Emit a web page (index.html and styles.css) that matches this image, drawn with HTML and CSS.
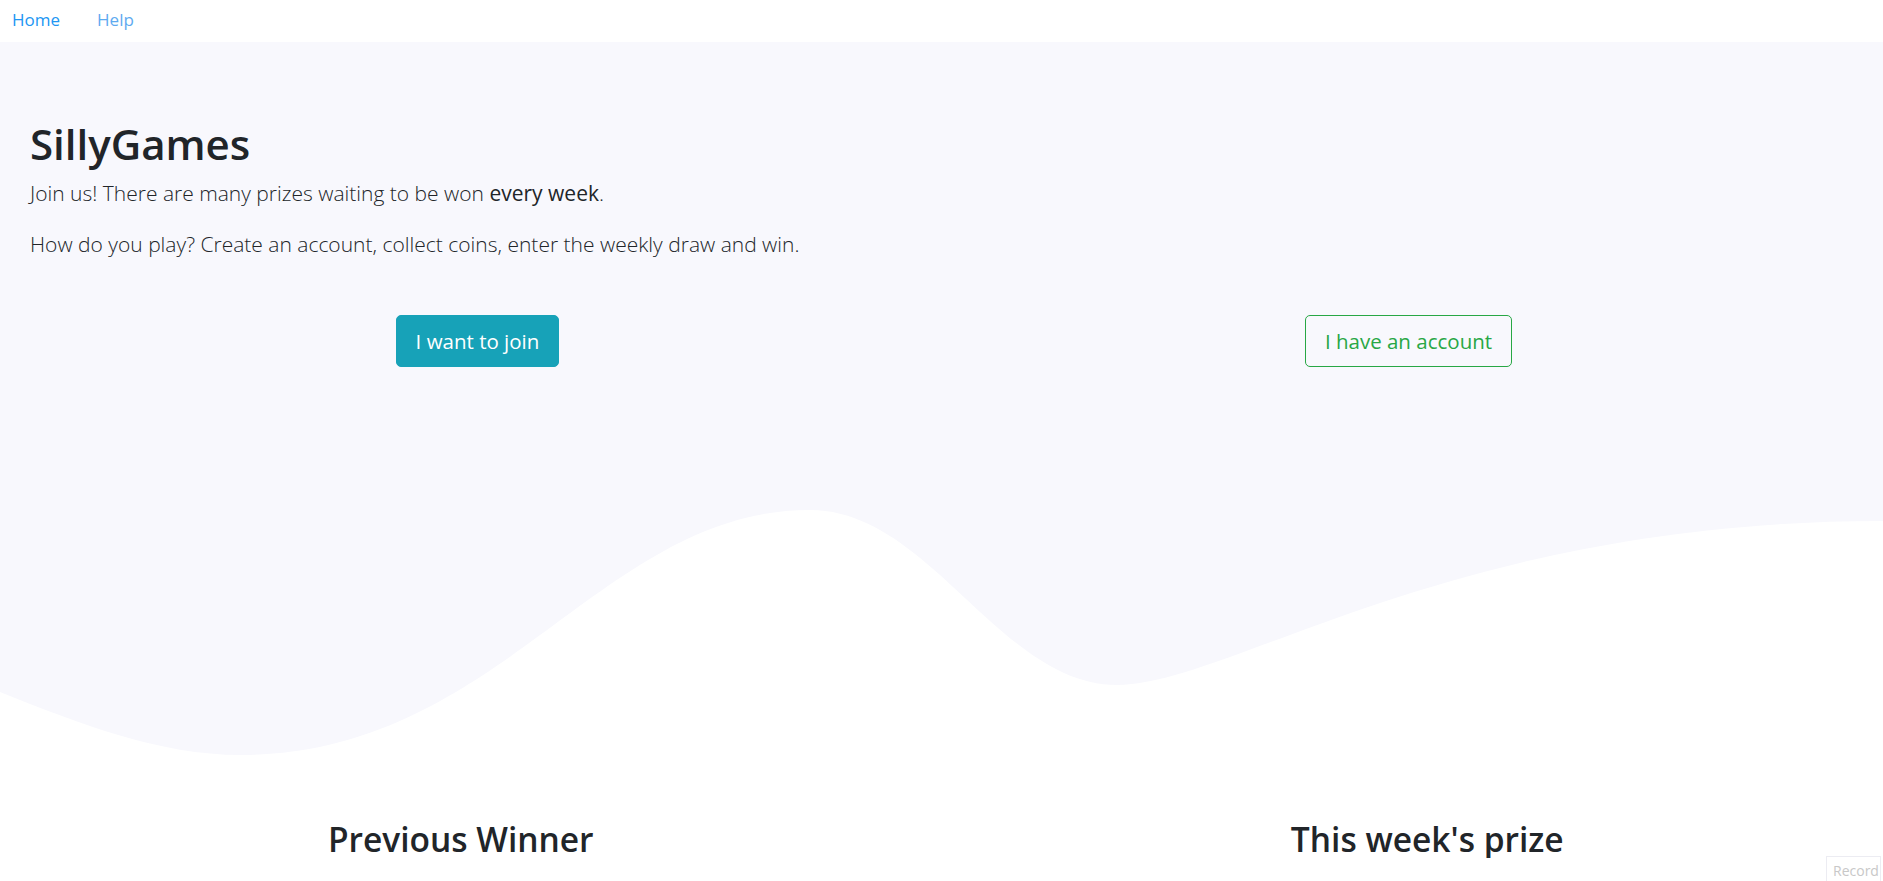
FILE: index.html
```html
<!DOCTYPE html>
<html lang="en">
<head>
<meta charset="utf-8">
<title>SillyGames</title>
<link rel="stylesheet" href="styles.css">
</head>
<body>
<nav class="topnav">
  <a class="nav-link nav-link-active" href="#">Home</a>
  <a class="nav-link" href="#">Help</a>
</nav>
<section class="hero">
  <div class="hero-inner">
    <div class="intro">
      <h1 class="title">SillyGames</h1>
      <p class="lead">Join us! There are many prizes waiting to be won <b class="em">every week</b>.</p>
      <p class="lead lead-last">How do you play? Create an account, collect coins, enter the weekly draw and win.</p>
    </div>
    <div class="actions">
      <div class="action-col"><a class="btn btn-info" href="#">I want to join</a></div>
      <div class="action-col"><a class="btn btn-outline-success" href="#">I have an account</a></div>
    </div>
  </div>
  <svg class="wave" viewBox="0 0 1883 300" preserveAspectRatio="none" aria-hidden="true">
    <path d="M0,213 C80,245 160,276 240,276 C500,276 600,31 810,31 C930,31 1000,206 1117,206 C1230,206 1450,42 1883,42 L1883,300 L0,300 Z" fill="#ffffff"/>
  </svg>
</section>
<section class="prizes">
  <div class="prize-col prize-col-left"><h2 class="prize-title">Previous Winner</h2></div>
  <div class="prize-col prize-col-right"><h2 class="prize-title">This week's prize</h2></div>
</section>
<div class="record">Record</div>
</body>
</html>
```
FILE: styles.css
```css
html, body {
  margin: 0;
  padding: 0;
  background: #ffffff;
  overflow: hidden;
}
body {
  font-family: "Open Sans", "Noto Sans", sans-serif;
  color: #212529;
}
.topnav {
  height: 42px;
  display: flex;
  align-items: center;
  gap: 37px;
  padding-left: 12px;
  background: #ffffff;
}
.nav-link {
  font-size: 17px;
  text-decoration: none;
  color: #5eaaf0;
  line-height: 1;
  margin-top: -3px;
}
.nav-link-active {
  color: #2196f3;
}
.hero {
  background: #f8f8fd;
}
.hero-inner {
  padding: 78px 9px 0 12px;
}
.intro {
  padding-left: 18px;
}
.title {
  margin: 0 0 9px;
  font-size: 42px;
  font-weight: 600;
  line-height: 48px;
  color: #212529;
}
.lead {
  margin: 0 0 18px;
  font-size: 21px;
  font-weight: 300;
  line-height: 33px;
  color: #212529;
}
.lead-last {
  margin-bottom: 0;
}
.em {
  font-weight: 400;
}
.actions {
  display: grid;
  grid-template-columns: 1fr 1fr;
  justify-items: center;
  margin-top: 54px;
  margin-bottom: 112px;
}
.btn {
  display: flex;
  align-items: center;
  height: 52px;
  box-sizing: border-box;
  padding: 0 19px;
  border-radius: 5px;
  font-size: 20.5px;
  text-decoration: none;
  border: 1px solid transparent;
}
.btn-info {
  background: #17a2b8;
  border-color: #17a2b8;
  color: #ffffff;
}
.btn-outline-success {
  background: transparent;
  border-color: #28a745;
  color: #28a745;
}
.wave {
  display: block;
  width: 100%;
  height: 300px;
}
.prizes {
  display: grid;
  grid-template-columns: 1fr 1fr;
  padding-top: 41px;
}
.prize-col {
  text-align: center;
}
.prize-col-left {
  padding-right: 20px;
}
.prize-col-right {
  padding-left: 30px;
}
.prize-title {
  margin: 0;
  font-size: 33.5px;
  font-weight: 600;
  line-height: 38px;
  color: #212529;
}
.record {
  position: fixed;
  right: 2px;
  top: 856px;
  width: 55px;
  height: 40px;
  box-sizing: border-box;
  padding: 5px 0 0 6px;
  border: 1px solid #ececf2;
  background: #ffffff;
  color: #c8c8c8;
  font-size: 14px;
  line-height: 18px;
}
```
